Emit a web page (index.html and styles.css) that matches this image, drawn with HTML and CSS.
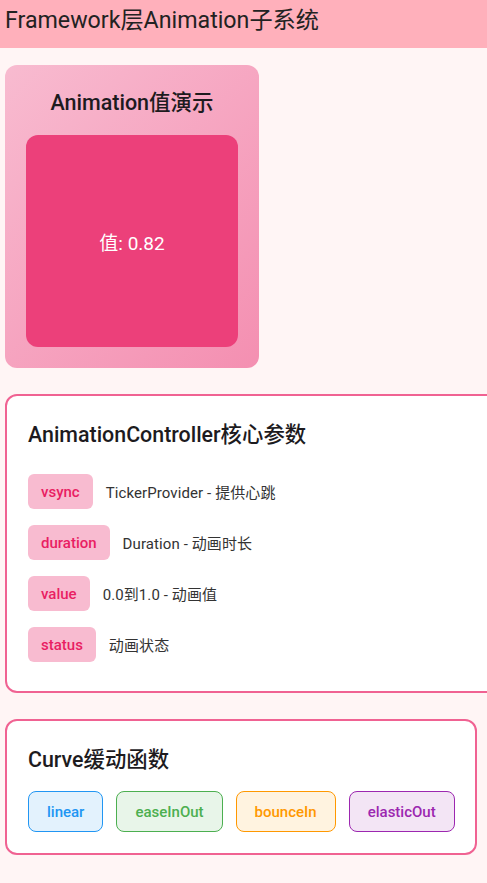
FILE: index.html
```html
<!DOCTYPE html>
<html lang="zh">
<head>
<meta charset="utf-8">
<title>Framework层Animation子系统</title>
<link rel="stylesheet" href="styles.css">
</head>
<body>
<header class="appbar">Framework层Animation子系统</header>
<main class="content">
  <section class="demo-card">
    <h2 class="demo-title">Animation值演示</h2>
    <div class="demo-box">值: 0.82</div>
  </section>

  <section class="card card-wide">
    <h2 class="card-title">AnimationController核心参数</h2>
    <div class="param-row"><span class="param-chip">vsync</span><span class="param-desc">TickerProvider - 提供心跳</span></div>
    <div class="param-row"><span class="param-chip">duration</span><span class="param-desc">Duration - 动画时长</span></div>
    <div class="param-row"><span class="param-chip">value</span><span class="param-desc">0.0到1.0 - 动画值</span></div>
    <div class="param-row"><span class="param-chip">status</span><span class="param-desc">动画状态</span></div>
  </section>

  <section class="card card-curve">
    <h2 class="card-title">Curve缓动函数</h2>
    <div class="curve-list">
      <span class="curve-chip curve-blue">linear</span>
      <span class="curve-chip curve-green">easeInOut</span>
      <span class="curve-chip curve-orange">bounceIn</span>
      <span class="curve-chip curve-purple">elasticOut</span>
    </div>
  </section>
</main>
</body>
</html>
```

FILE: styles.css
```css
html {
  overflow-x: hidden;
}
body {
  margin: 0;
  background: #fff5f5;
  font-family: Roboto, "Noto Sans CJK SC", sans-serif;
  color: #212121;
  overflow-x: hidden;
}
.appbar {
  height: 48px;
  box-sizing: border-box;
  background: #ffb0bb;
  padding: 4px 0 0 5px;
  font-size: 23.2px;
  line-height: 32px;
  color: #222;
}
.content {
  padding: 17px 0 0 5px;
  display: flex;
  flex-direction: column;
  align-items: flex-start;
  gap: 26px;
}
.demo-card {
  width: 254px;
  height: 303px;
  box-sizing: border-box;
  padding: 21px;
  border-radius: 12px;
  background: linear-gradient(135deg, #f8bbd0 0%, #f48fb1 100%);
  display: flex;
  flex-direction: column;
  align-items: center;
}
.demo-title {
  margin: 0 0 18px;
  padding-top: 3px;
  font-size: 21.5px;
  font-weight: 500;
  line-height: 28px;
  color: #1d1b1e;
}
.demo-box {
  width: 212px;
  height: 212px;
  border-radius: 12px;
  background: #ec407a;
  color: #fff;
  font-size: 19px;
  display: flex;
  align-items: center;
  justify-content: center;
}
.card {
  box-sizing: border-box;
  background: #fff;
  border: 2px solid #f06292;
  border-radius: 12px;
  padding: 21px;
}
.card-wide {
  width: 500px;
}
.card-curve {
  width: 472px;
}
.card-title {
  margin: 4px 0 17px;
  font-size: 21.4px;
  font-weight: 500;
  line-height: 28px;
  color: #1d1b1e;
}
.param-row {
  display: flex;
  align-items: center;
  gap: 13px;
  padding: 8px 0;
}
.param-chip {
  height: 35px;
  box-sizing: border-box;
  padding: 0 13px;
  border-radius: 6px;
  background: #f8bbd0;
  color: #e91e63;
  font-size: 15px;
  font-weight: 500;
  display: flex;
  align-items: center;
}
.param-desc {
  font-size: 15px;
  letter-spacing: 0.1px;
  color: #333;
}
.curve-list {
  display: flex;
  gap: 13px;
}
.curve-chip {
  height: 41px;
  box-sizing: border-box;
  padding: 0 18px;
  border-radius: 8px;
  border: 1.6px solid;
  font-size: 15px;
  font-weight: 500;
  display: flex;
  align-items: center;
}
.curve-blue { border-color: #2196f3; background: #e3f2fd; color: #2196f3; }
.curve-green { border-color: #4caf50; background: #e8f5e9; color: #4caf50; }
.curve-orange { border-color: #ff9800; background: #fff3e0; color: #ff9800; }
.curve-purple { border-color: #9c27b0; background: #f3e5f5; color: #9c27b0; }
```
